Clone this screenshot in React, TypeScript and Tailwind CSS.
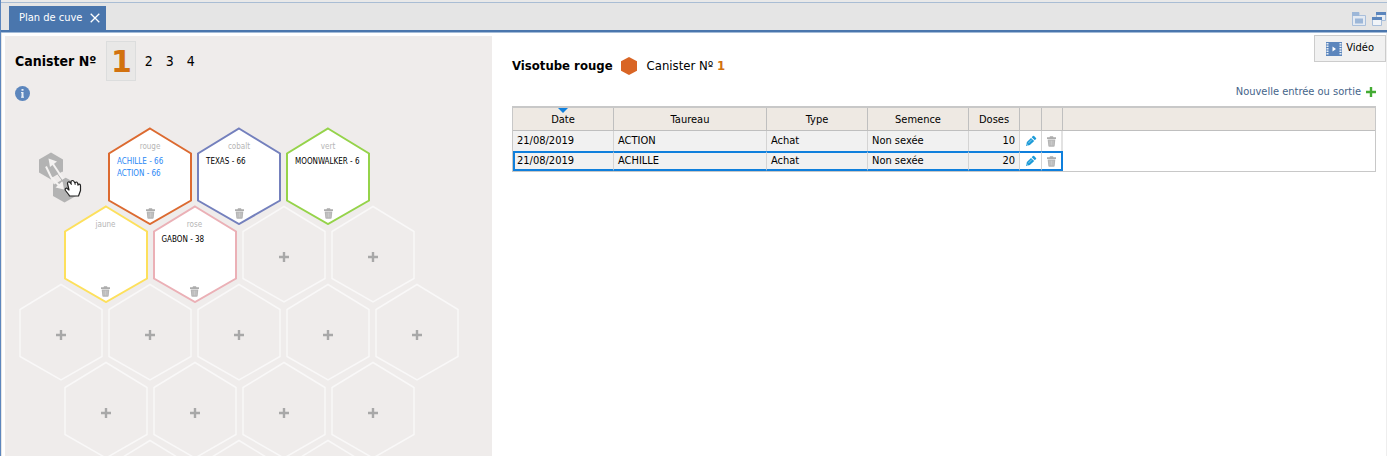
import { useState } from "react";
import clsx from "clsx";

type Tube = {
  name: string;
  stroke: string;
  bulls: string[];
};

const TUBES: (Tube | null)[][] = [
  [
    { name: "rouge", stroke: "#dc6a30", bulls: ["ACHILLE - 66", "ACTION - 66"] },
    { name: "cobalt", stroke: "#7480bd", bulls: ["TEXAS - 66"] },
    { name: "vert", stroke: "#95d34a", bulls: ["MOONWALKER - 6"] },
  ],
  [
    { name: "jaune", stroke: "#fde05c", bulls: [] },
    { name: "rose", stroke: "#ebb0b6", bulls: ["GABON - 38"] },
    null,
    null,
  ],
  [null, null, null, null, null],
  [null, null, null, null],
  [null, null, null],
];

const ENTRIES = [
  { date: "21/08/2019", bull: "ACTION", type: "Achat", semen: "Non sexée", doses: 10 },
  { date: "21/08/2019", bull: "ACHILLE", type: "Achat", semen: "Non sexée", doses: 20 },
];

function TrashIcon() {
  return (
    <svg width="9" height="11" viewBox="0 0 9 11" aria-hidden="true">
      <path d="M3 0.3h3l0.5 1H9v1.6H0V1.3h2.5z" fill="#adadad" />
      <path d="M0.7 3.4h7.6l-0.6 6.4q-0.1 1-1 1H2.3q-0.9 0-1-1z" fill="#b5b5b5" />
      <path d="M3 4.6v4.8M4.5 4.6v4.8M6 4.6v4.8" stroke="#d6d6d6" strokeWidth="0.6" />
    </svg>
  );
}

function PencilIcon() {
  return (
    <svg width="12" height="12" viewBox="0 0 12 12" aria-hidden="true">
      <path d="M1 11l0.9-4L6 2.9l3.2 3.2-4.3 4z" fill="#1d9bd8" />
      <path d="M6.7 2.2l1.2-1.2q0.6-0.5 1.2 0l1.9 1.9q0.6 0.6 0 1.2l-1.2 1.2z" fill="#1d9bd8" />
      <path d="M3.3 8.2l3.6-3.6" stroke="#a5daf2" strokeWidth="0.8" />
      <path d="M1.5 9.1l1.5 1.4" stroke="#fff" strokeWidth="0.6" />
    </svg>
  );
}

function PlusIcon({ className, size }: { className: string; size: number }) {
  return (
    <svg width={size} height={size} viewBox="0 0 10 10" className={className} aria-hidden="true">
      <path d="M5 0v10M0 5h10" stroke="currentColor" strokeWidth="2.4" />
    </svg>
  );
}

function Hexagon({ tube }: { tube: Tube | null }) {
  return (
    <div className="relative h-[98px] w-[84px] shrink-0">
      <svg width="84" height="98" viewBox="0 0 84 98" className="absolute inset-0" aria-hidden="true">
        <path
          d="M42 1.5L83 26.5V73.5L42 97L1 73.5V26.5Z"
          fill={tube ? "#fff" : "none"}
          stroke={tube ? tube.stroke : "#f9f8f8"}
          strokeWidth={tube ? 2 : 1.5}
        />
      </svg>
      {tube ? (
        <div className="relative flex h-full flex-col items-center pt-3 pb-1.5">
          <span className="text-[8px] leading-4 text-[#b5b5b5]">{tube.name}</span>
          <ul
            className={clsx(
              "w-full grow pl-[9px] pt-px text-[8px] leading-3 whitespace-nowrap",
              tube.name === "rouge" ? "text-[#2a87f5]" : "text-black"
            )}
          >
            {tube.bulls.map((bull) => (
              <li key={bull}>{bull}</li>
            ))}
          </ul>
          <button type="button" aria-label={`Supprimer ${tube.name}`}>
            <TrashIcon />
          </button>
        </div>
      ) : (
        <button
          type="button"
          aria-label="Ajouter un visotube"
          className="relative flex h-full w-full items-center justify-center pt-1.5"
        >
          <PlusIcon size={10} className="text-[#a8a8a8]" />
        </button>
      )}
    </div>
  );
}

function SwapIcon() {
  return (
    <svg width="46" height="52" viewBox="0 0 46 52" aria-hidden="true">
      <path d="M13 0.5L25 7.5V20.5L13 27.5L1 20.5V7.5Z" fill="#b3b3b3" />
      <path d="M26.5 25L38 31.500V44L26.5 50.500L15 44V31.500Z" fill="#b3b3b3" />
      <path d="M12.500 26.500L24.500 19.500L28 25.500L16 32.500Z" fill="#efeceb" />
      <path d="M14 10.500L25 27" stroke="#f4f2f1" strokeWidth="2" />
      <path d="M8 14.500L13 25L21 33.500" stroke="#f4f2f1" strokeWidth="2" fill="none" />
      <path d="M10.500 6.500L19 9.500L12 15Z" fill="#f4f2f1" />
      <path d="M26 37.500L17.500 35.500L24.500 29Z" fill="#f4f2f1" />
      <path d="M18.500 20.500L26 31" stroke="#b3b3b3" strokeWidth="1" />
      {/* grabbing hand */}
      <path
        d="M31 43L27.5 38.5Q26.5 36.5 28.500 36L31 38L29.5 31.5Q29.5 29.5 31.5 30L33 31.5V29.5Q34.5 27.5 36 29.5L37 31Q38.5 29 39.5 31L40 32.5Q42.5 31.5 42.5 34V38.5L40.5 44H31.5Z"
        fill="#fff"
        stroke="#222"
        strokeWidth="1.2"
        strokeLinejoin="round"
      />
      <path d="M33 31.5L33.500 33M37 31L37.200 33M40 32.5V34" stroke="#222" strokeWidth="0.8" />
    </svg>
  );
}

function TabBar() {
  return (
    <header className="flex h-[33px] shrink-0 flex-col border-b border-[#a3bbd8] bg-[#e5e5e5]">
      <div className="h-[3px] border-b border-[#a9bdd4] bg-[#e9e9e9]" />
      <div className="flex grow items-end justify-between border-b-2 border-[#4a76ad] pl-2">
        <div className="flex h-6 items-center gap-2 bg-[#4a76ad] px-1.5 pl-2.5 text-[11px] text-white">
          <span>Plan de cuve</span>
          <button type="button" aria-label="Fermer l'onglet">
            <svg width="10" height="10" viewBox="0 0 10 10" aria-hidden="true">
              <path d="M0.7 0.7L9.3 9.3M9.3 0.7L0.7 9.3" stroke="#fff" strokeWidth="1.3" />
            </svg>
          </button>
        </div>
        <div className="flex gap-1.5 pr-px pb-1">
          <button type="button" aria-label="Afficher en liste">
            <svg width="14" height="14" viewBox="0 0 14 14" aria-hidden="true">
              <path d="M0.5 13.5V0.5H7V3.5H13.5V13.5Z" fill="#e4eaf2" stroke="#a9bfdb" />
              <path d="M0 0h7v4H0z" fill="#9db7d8" />
              <path d="M3 6.5h8v5H3z" fill="#9db7d8" />
            </svg>
          </button>
          <button type="button" aria-label="Détacher la fenêtre">
            <svg width="14" height="14" viewBox="0 0 14 14" aria-hidden="true">
              <path d="M4.5 0.5H13.5V8.5H4.5Z" fill="#e9eef4" stroke="#a9bfdb" />
              <path d="M4 0h10v3H4z" fill="#5c86bd" />
              <path d="M0.5 5.5H9.5V13.5H0.5Z" fill="#f1f4f8" stroke="#a9bfdb" />
              <path d="M0 5h10v3H0z" fill="#5c86bd" />
            </svg>
          </button>
        </div>
      </div>
    </header>
  );
}

function TankPlan() {
  const [canister, setCanister] = useState(1);

  return (
    <section className="mt-[3px] ml-[3px] w-[487px] shrink-0 overflow-hidden bg-[#efeceb]">
      <div className="flex items-center pt-[5px] pl-2.5">
        <h1 className="mr-2.5 text-[14px] font-bold whitespace-nowrap">Canister Nº</h1>
        {[1, 2, 3, 4].map((n) => (
          <button
            key={n}
            type="button"
            onClick={() => setCanister(n)}
            className={clsx(
              n === canister
                ? "mr-0.5 h-10 w-[30px] border border-[#dcdddd] bg-[#e9e8e7] font-['DejaVu_Sans',sans-serif] text-[30px] leading-10 font-bold text-[#d2720f]"
                : "w-[21px] text-[14px] leading-5"
            )}
          >
            {n}
          </button>
        ))}
      </div>
      <button type="button" aria-label="Informations" className="mt-[5px] ml-2.5 block">
        <svg width="15" height="15" viewBox="0 0 15 15" aria-hidden="true">
          <circle cx="7.5" cy="7.5" r="7.5" fill="#5c86bd" />
          <path d="M7.5 3v1.800M7.5 6v5.500" stroke="#e6edf6" strokeWidth="2" />
          <path d="M6 6.500h1.500M6 11.200h3" stroke="#e6edf6" strokeWidth="1" />
        </svg>
      </button>
      <div className="relative ml-[13px] flex w-[442px] flex-col pt-[26px]">
        {TUBES.map((row, i) => (
          <div key={i} className={clsx("flex justify-center gap-[5px]", i > 0 && "-mt-5")}>
            {row.map((tube, j) => (
              <Hexagon key={j} tube={tube} />
            ))}
          </div>
        ))}
        <button type="button" aria-label="Déplacer un visotube" className="absolute top-[51px] left-5">
          <SwapIcon />
        </button>
      </div>
    </section>
  );
}

function EntriesTable() {
  const [selected, setSelected] = useState(1);
  const head = "relative border-r border-b border-[#bfbfbf] pt-px font-normal";

  return (
    <table className="mt-1.5 w-full table-fixed border-separate border-spacing-0 border border-t-2 border-[#c8c8c8] text-[11px] leading-4">
      <colgroup>
        <col className="w-[101px]" />
        <col className="w-[153px]" />
        <col className="w-[101px]" />
        <col className="w-[101px]" />
        <col className="w-[51px]" />
        <col className="w-[22px]" />
        <col className="w-[21px]" />
        <col />
      </colgroup>
      <thead>
        <tr className="h-[23px] bg-[#eee9e3]">
          <th className={head}>
            <svg width="10" height="5" viewBox="0 0 10 5" className="absolute top-0 left-[45px]" aria-hidden="true">
              <path d="M0 0h10L5 5z" fill="#0f7fdc" />
            </svg>
            Date
          </th>
          <th className={head}>Taureau</th>
          <th className={head}>Type</th>
          <th className={head}>Semence</th>
          <th className={head}>Doses</th>
          <th className={head} aria-label="Modifier" />
          <th className={head} aria-label="Supprimer" />
          <th className="border-b border-[#bfbfbf]" />
        </tr>
      </thead>
      <tbody>
        {ENTRIES.map((entry, i) => {
          const active = i === selected;
          const cell = clsx(
            "border-r border-r-[#d4d4d4] px-1 whitespace-nowrap",
            active && "border-y-2 border-y-[#0f7fdc]"
          );
          return (
            <tr key={i} className="h-5" onClick={() => setSelected(i)}>
              <td className={clsx(cell, "bg-[#f1f1f1]", active && "border-l-2 border-l-[#0f7fdc] pl-0.5")}>
                {entry.date}
              </td>
              <td className={clsx(cell, "bg-[#f1f1f1]")}>{entry.bull}</td>
              <td className={clsx(cell, "bg-[#f1f1f1]")}>{entry.type}</td>
              <td className={clsx(cell, "bg-[#f1f1f1]")}>{entry.semen}</td>
              <td className={clsx(cell, "bg-[#f1f1f1] text-right")}>{entry.doses}</td>
              <td className={clsx(cell, "pl-[5px]")}>
                <button type="button" aria-label="Modifier" className="block">
                  <PencilIcon />
                </button>
              </td>
              <td
                className={clsx(
                  "border-r-2 pl-[5px]",
                  active ? "border-y-2 border-[#0f7fdc]" : "border-r-[#e2e2e2]"
                )}
              >
                <button type="button" aria-label="Supprimer" className="block">
                  <TrashIcon />
                </button>
              </td>
              <td />
            </tr>
          );
        })}
      </tbody>
    </table>
  );
}

function TubeDetails() {
  return (
    <section className="min-w-0 grow border-r border-[#eeeeee] bg-white pt-0.5 pl-5">
      <div className="flex items-start justify-between">
        <div className="mt-[21px] flex items-center text-[13px] leading-5">
          <h2 className="font-bold">Visotube rouge</h2>
          <svg width="16" height="18" viewBox="0 0 16 18" className="mr-2.5 ml-2" aria-hidden="true">
            <path d="M8 0L16 4.3V13.7L8 18L0 13.7V4.3Z" fill="#d96525" />
          </svg>
          <p>
            Canister Nº <b className="text-[#d2720f]">1</b>
          </p>
        </div>
        <button
          type="button"
          className="flex h-[27px] items-center gap-1 border border-[#cccccc] bg-[#f1f1f1] px-[11px] text-[11px]"
        >
          <svg width="16" height="14" viewBox="0 0 16 14" aria-hidden="true">
            <path d="M0 0h16v14H0z" fill="#5c86bd" />
            <path d="M1.5 1v12M14.5 1v12" stroke="#e6edf6" strokeWidth="2" strokeDasharray="1.5 1" />
            <path d="M6.5 4.5L10 7L6.5 9.5Z" fill="#fff" />
          </svg>
          Vidéo
        </button>
      </div>
      <div className="pr-2.5">
        <div className="mt-2 flex justify-end">
          <a href="#" className="flex items-center gap-[5px] text-[11px] leading-4 text-[#45648a]">
            Nouvelle entrée ou sortie
            <PlusIcon size={10} className="text-[#43ab33]" />
          </a>
        </div>
        <EntriesTable />
      </div>
    </section>
  );
}

export default function App() {
  return (
    <div className="flex h-screen flex-col overflow-hidden border-l border-[#5c86bd] bg-white font-['DejaVu_Sans_Condensed','DejaVu_Sans',sans-serif] text-black">
      <TabBar />
      <main className="flex min-h-0 grow border-l border-[#e5e5e5]">
        <TankPlan />
        <TubeDetails />
      </main>
    </div>
  );
}
